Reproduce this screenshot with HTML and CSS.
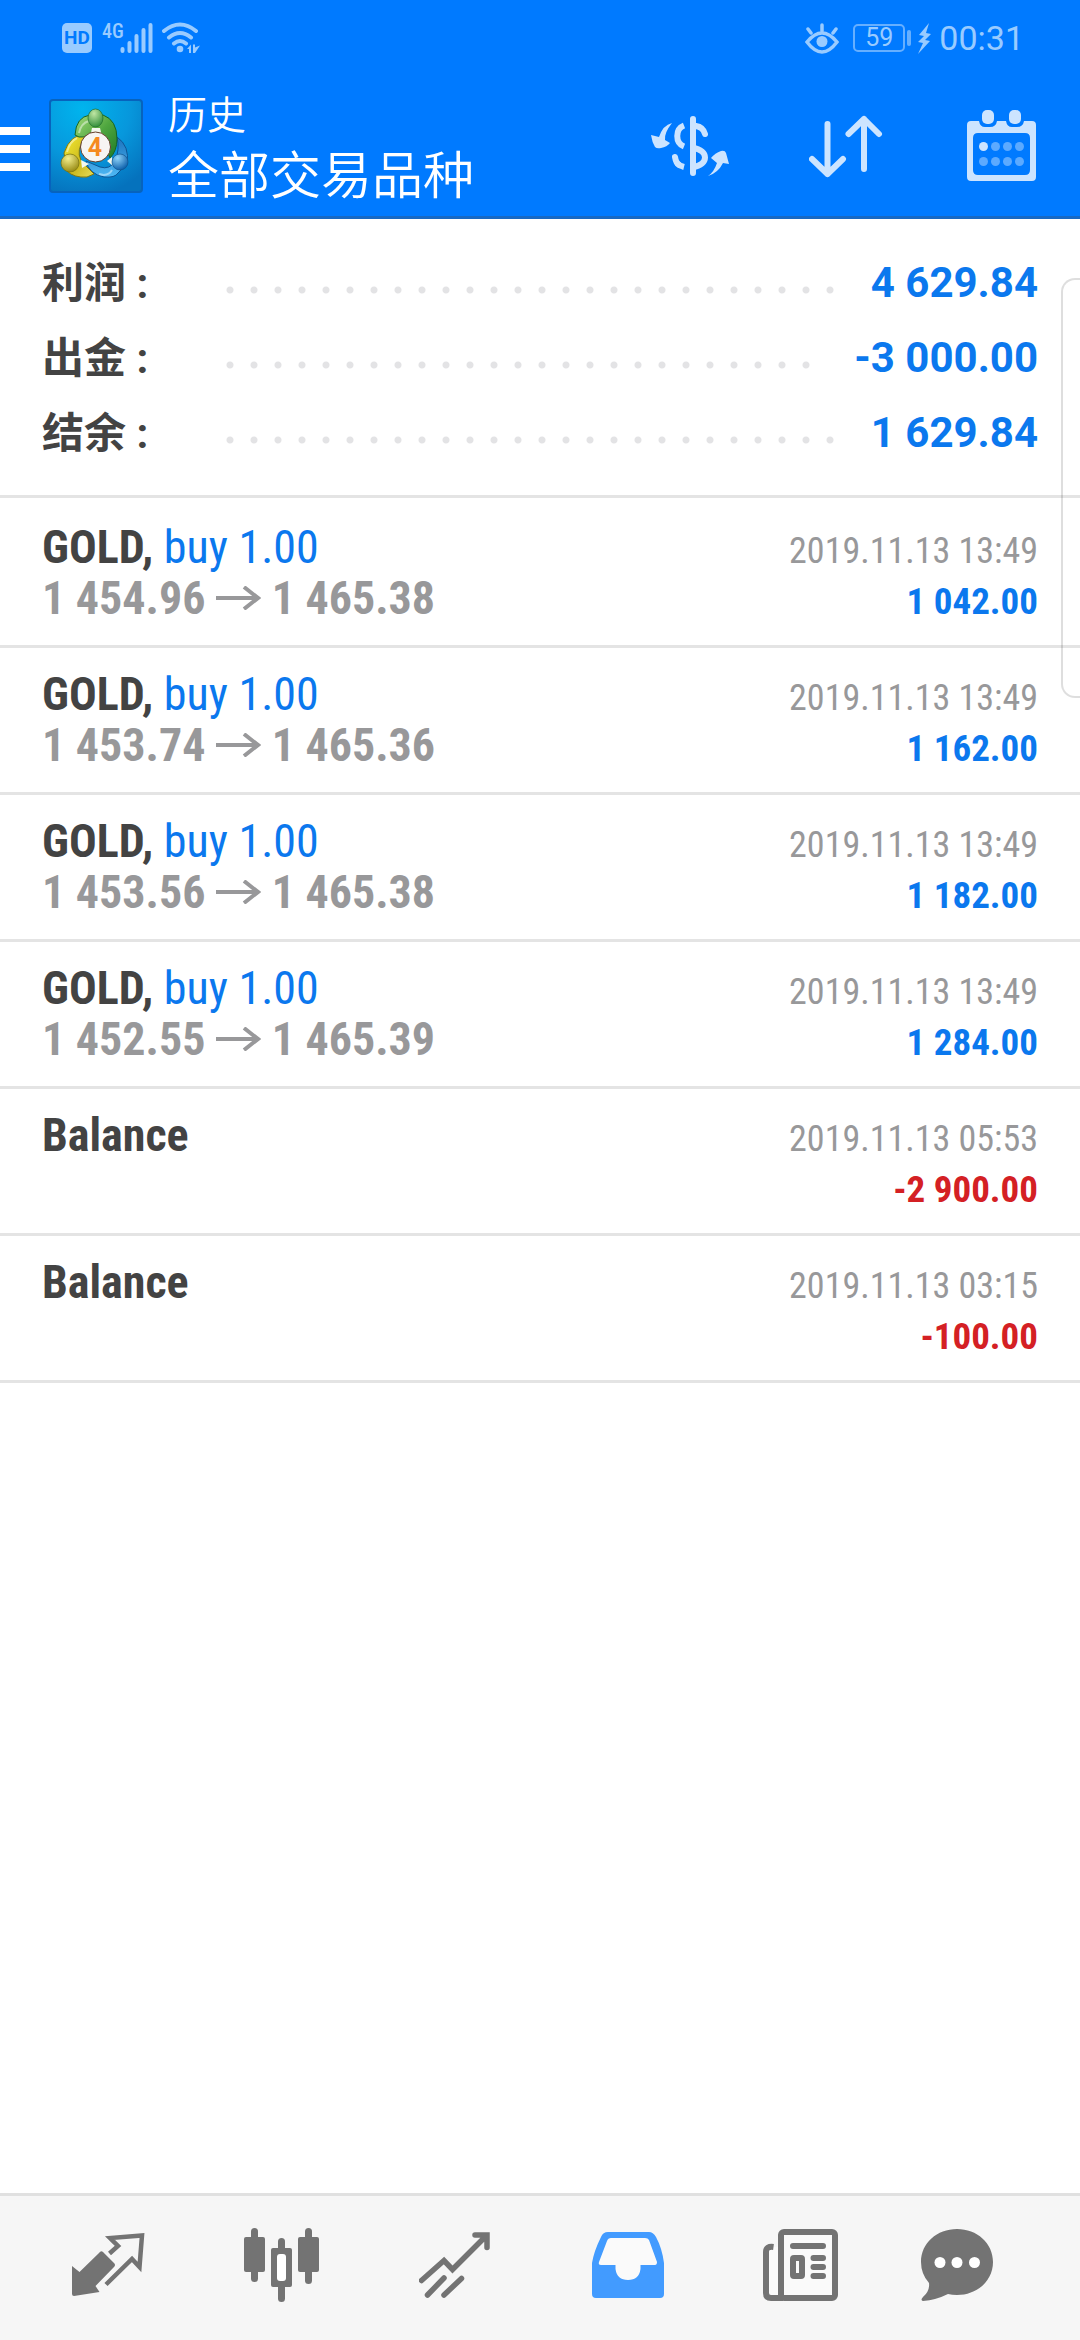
FILE: index.html
```html
<!DOCTYPE html>
<html lang="zh-CN">
<head>
<meta charset="utf-8">
<meta name="viewport" content="width=device-width, initial-scale=1">
<title>历史</title>
<link rel="stylesheet" href="styles.css">
</head>
<body>
<div class="app">
  <header class="top">
    <div class="status">
      <div class="status-group">
        <span class="hd">HD</span>
        <span class="network">4G</span>
        <svg class="signal" width="33" height="32" viewBox="0 0 33 32" fill="none" stroke="currentColor" stroke-width="4" stroke-linecap="round"><path d="M2.500 27v2M9.500 21v8M16.500 14v15M23.500 8v21M30.500 3v26"/></svg>
        <svg class="wifi" width="38" height="32" viewBox="0 0 38 32" fill="none" stroke="currentColor" stroke-width="4" stroke-linecap="round"><path d="M2 9q16-13 32 0M7 15.500q11-9 22 0M12 21.500q6-5 12 0"/><circle cx="18" cy="27" r="3.300" fill="currentColor" stroke="none"/><path d="M25 27l4-4.500v8.500h-2v-4zM31 22.500h2v3l5-2-5 7.500h-2z" fill="currentColor" stroke="none"/></svg>
      </div>
      <div class="status-group">
        <svg class="eye" width="34" height="31" viewBox="0 0 34 31" fill="none" stroke="currentColor" stroke-width="3.500" stroke-linecap="round"><path d="M2 19q15-18 30 0q-15 20-30 0zM17 2v6M3 6l3 4M31 6l-3 4"/><circle cx="17" cy="18.500" r="5.500" fill="currentColor" stroke="none"/></svg>
        <span class="battery">59</span>
        <span class="battery-cap"></span>
        <svg class="bolt" width="13" height="31" viewBox="0 0 13 31" fill="currentColor"><path d="M11 0L1 12l5 1-6 6 5 1-5 11 12-13-5-1 6-6-5-1z"/></svg>
        <time class="clock">00:31</time>
      </div>
    </div>
    <div class="toolbar">
      <button class="menu" aria-label="菜单">
        <span class="bars"><i></i><i></i><i></i></span>
        <svg class="logo" width="94" height="94" viewBox="0 0 94 94">
          <defs>
            <radialGradient id="sky" cx=".35" cy=".1" r=".95"><stop offset="0" stop-color="#00b4ee"/><stop offset=".55" stop-color="#0797dc"/><stop offset="1" stop-color="#0572bd"/></radialGradient>
            <linearGradient id="green" x2="1" y2="1"><stop offset="0" stop-color="#a5dc7c"/><stop offset=".5" stop-color="#4fa63f"/><stop offset="1" stop-color="#1e7a26"/></linearGradient>
            <linearGradient id="yellow" x2="1" y2="1"><stop offset="0" stop-color="#f7ee32"/><stop offset=".6" stop-color="#cbb91f"/><stop offset="1" stop-color="#e6dd5c"/></linearGradient>
            <linearGradient id="blue" x2="0" y2="1"><stop offset="0" stop-color="#1a72bd"/><stop offset="1" stop-color="#4fb9f5"/></linearGradient>
            <radialGradient id="gh" cx=".4" cy=".25" r=".8"><stop offset="0" stop-color="#c0e7a4"/><stop offset="1" stop-color="#2c8a36"/></radialGradient>
            <radialGradient id="yh" cx=".4" cy=".25" r=".8"><stop offset="0" stop-color="#f4ee8c"/><stop offset="1" stop-color="#92850d"/></radialGradient>
            <radialGradient id="bh" cx=".35" cy=".25" r=".8"><stop offset="0" stop-color="#8fd4fa"/><stop offset="1" stop-color="#085ba8"/></radialGradient>
          </defs>
          <rect x="1" y="1" width="92" height="92" rx="3" fill="url(#sky)" stroke="#0763bd" stroke-width="2"/>
          <path d="M68 38q13 9 10 27l-9 9q-3 5-14 4-15-3-18-16l14 6q10 3 15-6 5-11 2-24z" fill="url(#blue)" stroke="#0d5595"/>
          <path d="M38 35q-17 0-23 19l3 18q7 7 20 6l7-3-10-10q-8-8-3-20z" fill="url(#yellow)" stroke="#81770f"/>
          <path d="M26 36q1-18 15-20h13q14 5 14 24 0 12-7 19l-7-17-6-11h-4q-5 8-14 7z" fill="url(#green)" stroke="#176424"/>
          <path d="M30 34q2-10 10-12M18 53q3-11 10-14M50 75q9 3 13-4" fill="none" stroke="#fff" stroke-opacity=".45" stroke-width="2"/>
          <path d="M43 29h8l2 8-6-3-6 4zM32 61l8 4-7 4zM58 62l5-4 1 9z" fill="#f3f8ee"/>
          <ellipse cx="46.500" cy="19" rx="7.500" ry="9" fill="url(#gh)" stroke="#206c2c" stroke-width=".7"/>
          <circle cx="21" cy="64" r="9" fill="url(#yh)" stroke="#75700f" stroke-width=".7"/>
          <circle cx="71" cy="63" r="8" fill="url(#bh)" stroke="#10548f" stroke-width=".7"/>
          <circle cx="46.500" cy="48" r="15" fill="#f7f5f3" stroke="#653e2a"/>
          <text class="logo-digit" x="46" y="57" text-anchor="middle">4</text>
        </svg>
      </button>
      <div class="titles">
        <h1 class="title">历史</h1>
        <p class="subtitle">全部交易品种</p>
      </div>
      <div class="actions">
        <button class="action" aria-label="刷新">
          <svg width="78" height="60" viewBox="0 0 78 60" fill="none" stroke="currentColor" stroke-width="6"><path d="M42 3v54M54 18q-2-7-9-8M24 41q1 6 4 8" stroke-linecap="round"/><path d="M33 9.500C24 13 24 27 33 30.500M26 47q3 3 7 4M42 32C58 34 58 49 42 51"/><path d="M21 7Q12 9 8 21L0 19q1 7 4 12 2 2 6 1 6-1 9-5l-5-3Q13 17 21 7zM57 60q6-4 9-13l-6-5q4-5 10-7 4-1 5 2l3 11-6-1q-5 10-15 13z" fill="currentColor" stroke="none"/></svg>
        </button>
        <button class="action" aria-label="排序">
          <svg width="74" height="63" viewBox="0 0 74 63" fill="none" stroke="currentColor" stroke-width="6" stroke-linecap="round" stroke-linejoin="round"><path d="M18.500 9v50M3 44l15.500 15L34 44M55 54V4M39.500 19L55 4l15 15"/></svg>
        </button>
        <button class="action" aria-label="日期">
          <svg width="70" height="72" viewBox="0 0 70 72" fill="currentColor"><path fill-rule="evenodd" d="M4 11h8q1 6 6 6h5q6 0 7-6h9q1 6 6 6h5q6 0 7-6h8q4 0 4 4v52q0 4-4 4H4q-4 0-4-4V15q0-4 4-4zM11 23q-5 0-5 5v32q0 5 5 5h47q5 0 5-5V28q0-5-5-5z"/><rect x="15" width="12" height="14" rx="5"/><rect x="42" width="12" height="14" rx="5"/><circle cx="16.500" cy="36.500" r="4.500"/><g opacity=".45"><circle cx="28.500" cy="36.500" r="4.500"/><circle cx="40.500" cy="36.500" r="4.500"/><circle cx="52.500" cy="36.500" r="4.500"/><circle cx="16.500" cy="51.500" r="4.500"/><circle cx="28.500" cy="51.500" r="4.500"/><circle cx="40.500" cy="51.500" r="4.500"/><circle cx="52.500" cy="51.500" r="4.500"/></g></svg>
        </button>
      </div>
    </div>
  </header>

  <main class="content">
    <dl class="summary">
      <div class="sum-row"><dt>利润 :</dt><dd class="dots" aria-hidden="true"></dd><dd class="sum-value">4 629.84</dd></div>
      <div class="sum-row"><dt>出金 :</dt><dd class="dots" aria-hidden="true"></dd><dd class="sum-value">-3 000.00</dd></div>
      <div class="sum-row"><dt>结余 :</dt><dd class="dots" aria-hidden="true"></dd><dd class="sum-value">1 629.84</dd></div>
    </dl>
    <ul class="deals">
      <li class="deal"><div class="line"><span class="symbol">GOLD, <span class="side">buy 1.00</span></span><time class="date">2019.11.13 13:49</time></div><div class="line"><span class="price">1 454.96 <svg class="arrow" width="45" height="24" viewBox="0 0 45 24"><path d="M0 12h42M28 1l14 11-14 11"/></svg> 1 465.38</span><span class="amount">1 042.00</span></div></li>
      <li class="deal"><div class="line"><span class="symbol">GOLD, <span class="side">buy 1.00</span></span><time class="date">2019.11.13 13:49</time></div><div class="line"><span class="price">1 453.74 <svg class="arrow" width="45" height="24" viewBox="0 0 45 24"><path d="M0 12h42M28 1l14 11-14 11"/></svg> 1 465.36</span><span class="amount">1 162.00</span></div></li>
      <li class="deal"><div class="line"><span class="symbol">GOLD, <span class="side">buy 1.00</span></span><time class="date">2019.11.13 13:49</time></div><div class="line"><span class="price">1 453.56 <svg class="arrow" width="45" height="24" viewBox="0 0 45 24"><path d="M0 12h42M28 1l14 11-14 11"/></svg> 1 465.38</span><span class="amount">1 182.00</span></div></li>
      <li class="deal"><div class="line"><span class="symbol">GOLD, <span class="side">buy 1.00</span></span><time class="date">2019.11.13 13:49</time></div><div class="line"><span class="price">1 452.55 <svg class="arrow" width="45" height="24" viewBox="0 0 45 24"><path d="M0 12h42M28 1l14 11-14 11"/></svg> 1 465.39</span><span class="amount">1 284.00</span></div></li>
      <li class="deal"><div class="line"><span class="symbol">Balance</span><time class="date">2019.11.13 05:53</time></div><div class="line"><span class="amount loss">-2 900.00</span></div></li>
      <li class="deal"><div class="line"><span class="symbol">Balance</span><time class="date">2019.11.13 03:15</time></div><div class="line"><span class="amount loss">-100.00</span></div></li>
    </ul>
    <div class="edge-panel"></div>
  </main>

  <nav class="tabs">
    <a class="tab" href="#quotes" aria-label="行情"><svg width="74" height="64" viewBox="0 0 74 64"><path d="M0 33l7.500 6L27 20q2-3 4-1l11 11q2 2 0 4L23.500 53l4 6L2 63q-2 0-2-2z" fill="currentColor"/><path d="M37.500 20.500L46 13 38 5l32-2.500-2.500 31.500-7.500-8-26 25.500" fill="none" stroke="currentColor" stroke-width="4.500"/></svg></a>
    <a class="tab" href="#charts" aria-label="图表"><svg width="75" height="74" viewBox="0 0 75 74" fill="currentColor"><rect y="9" width="21" height="35" rx="2"/><rect x="7" width="7" height="54" rx="3.500"/><rect x="54" y="9" width="21" height="35" rx="2"/><rect x="61" width="7" height="56" rx="3.500"/><rect x="34" y="10" width="7" height="64" rx="3.500"/><rect x="27" y="20" width="21" height="39" rx="2"/><rect x="33" y="26" width="9" height="27" rx="3" fill="#fff"/></svg></a>
    <a class="tab" href="#trade" aria-label="交易"><svg width="71" height="66" viewBox="0 0 71 66" fill="none" stroke="currentColor" stroke-width="5.500" stroke-linecap="round"><path d="M2.500 48.500L25 28.500l8.500 9L67 4M56 3h12v12.500M8.500 63L25 46M25 63l17.500-16.500"/></svg></a>
    <a class="tab active" href="#history" aria-label="历史" aria-current="page"><svg width="72" height="66" viewBox="0 0 72 66"><path d="M0 31q2-12 9-26 2-5 7-5h41q4 0 7 5 6 11 8 26v31q0 4-4 4H4q-4 0-4-4z" fill="currentColor"/><path d="M19 6h34q3 0 4 2l8 22q0 3-2 3H48.500v4Q47 48 36 48T23.500 37v-4H9q-3 0-2-3l8-21q1-3 4-3z" fill="#fafafa"/></svg></a>
    <a class="tab" href="#news" aria-label="新闻"><svg width="75" height="72" viewBox="0 0 75 72" fill="none" stroke="currentColor" stroke-width="6"><path fill="#fafafa" stroke="none" d="M4 18h14v50H4z"/><rect x="18" y="3" width="54" height="66" rx="3" fill="#fafafa"/><path d="M10.500 18Q3 17 3 23v41q0 5 5 5h12"/><path d="M30 17h30M50.500 29H60M50.500 38H60M50.500 47H60" stroke-linecap="round"/><rect x="30" y="29" width="9" height="18" rx="1"/></svg></a>
    <a class="tab" href="#mail" aria-label="消息"><svg width="72" height="72" viewBox="0 0 72 72"><path d="M36 0c20 0 36 14 36 33S56 66 36 66q-5 0-9-1-12 6-25 7-3-1 0-4 7-6 6-14Q0 45 0 33C0 14 16 0 36 0z" fill="currentColor"/><g fill="#fff"><circle cx="19" cy="33.500" r="5.500"/><circle cx="36" cy="33.500" r="5.500"/><circle cx="53.500" cy="33.500" r="5.500"/></g></svg></a>
  </nav>
</div>
</body>
</html>
```
FILE: styles.css
```css
* {
  box-sizing: border-box;
}

body,
h1,
p,
dl,
dd,
ul {
  margin: 0;
  padding: 0;
}

body {
  font-family: Roboto, "Noto Sans CJK SC", sans-serif;
  background: #fff;
  color: #434343;
}

svg {
  display: block;
  flex: none;
}

button {
  border: 0;
  padding: 0;
  background: none;
  color: inherit;
  font: inherit;
}

.app {
  display: flex;
  flex-direction: column;
  min-height: 100vh;
}

/* Header */
.top {
  background: #007aff;
  border-bottom: 3px solid #1769c4;
  color: #fff;
}

.status {
  display: flex;
  justify-content: space-between;
  align-items: center;
  height: 76px;
  padding: 0 56px 0 62px;
  color: #99cbff;
}

.status-group {
  display: flex;
  align-items: center;
}

.hd {
  width: 30px;
  border-radius: 5px;
  background: #99cbff;
  color: #007aff;
  font: bold 19px/30px Roboto, sans-serif;
  text-align: center;
}

.network {
  align-self: flex-start;
  margin-left: 10px;
  width: 18px;
  font: 500 20px/18px "Roboto Condensed", "Liberation Sans Narrow", sans-serif;
}

.wifi {
  margin-left: 9px;
}

.battery {
  width: 52px;
  margin-left: 14px;
  border: 2px solid #66afff;
  border-radius: 5px;
  font-size: 25px;
  line-height: 24px;
  text-align: center;
}

.battery-cap {
  width: 4px;
  height: 16px;
  margin: 0 7px 0 2px;
  border-radius: 2px;
  background: #66afff;
}

.clock {
  margin-left: 8px;
  font-size: 34px;
  line-height: 40px;
}

.toolbar {
  display: flex;
  height: 140px;
}

.menu {
  display: flex;
  align-items: center;
  gap: 19px;
}

.bars {
  display: grid;
  gap: 10px;
  padding-top: 6px;
}

.bars i {
  width: 30px;
  height: 8px;
  background: #fff;
}

.logo-digit {
  font: bold 25px Roboto, sans-serif;
  fill: #f58a1f;
}

.titles {
  flex: 1;
  padding: 11px 0 0 25px;
}

.title {
  font-size: 39px;
  font-weight: 350;
  line-height: 58px;
}

.subtitle {
  font-size: 51px;
  font-weight: 350;
  line-height: 64px;
}

.actions {
  display: flex;
}

.action {
  display: grid;
  place-items: center;
  width: 156px;
  color: #cce4ff;
}

/* Totals */
.content {
  position: relative;
  flex: 1;
}

.summary {
  padding: 25px 42px 26px;
  border-bottom: 3px solid #e4e4e4;
}

.sum-row {
  display: flex;
  align-items: center;
  height: 75px;
  font-size: 42px;
  font-weight: 700;
  line-height: 70px;
}

.sum-row dt {
  width: 176px;
  padding-top: 5px;
}

.dots {
  flex: 1;
  height: 24px;
  margin: 16px 34px 0 0;
  background: radial-gradient(circle at center, #e3e3e5 3px, transparent 4px) 0 0 / 24px 24px repeat-x;
}

.sum-value {
  padding-top: 2px;
  color: #0b78ee;
}

/* Deals */
.deals {
  padding-top: 3px;
  list-style: none;
  font-family: "Roboto Condensed", "Liberation Sans Narrow", sans-serif;
}

.deal {
  padding: 21px 42px;
  border-bottom: 3px solid #e4e4e4;
}

.line {
  display: flex;
  align-items: baseline;
  height: 51px;
  line-height: 51px;
}

/* Keeps the baseline of a line that has only an amount */
.line::before {
  content: "\200b";
  font-size: 46px;
  font-weight: 700;
}

.symbol {
  font-size: 46px;
  font-weight: 700;
}

.side {
  color: #0b78ee;
  font-weight: 400;
}

.price {
  color: #98989a;
  font-size: 46px;
  font-weight: 700;
}

.arrow {
  display: inline-block;
  margin-bottom: 4px;
  fill: none;
  stroke: currentColor;
  stroke-width: 4;
}

.date,
.amount {
  margin-left: auto;
}

.date {
  color: #98989a;
  font-size: 36px;
}

.amount {
  color: #0b78ee;
  font-size: 37px;
  font-weight: 700;
}

.loss {
  color: #d42024;
}

.edge-panel {
  position: absolute;
  top: 59px;
  right: 0;
  width: 19px;
  height: 420px;
  border: 2px solid rgba(0, 0, 0, 0.13);
  border-right: 0;
  border-radius: 14px 0 0 14px;
}

/* Bottom navigation */
.tabs {
  display: grid;
  grid-template-columns: repeat(5, 173fr) 140fr;
  height: 147px;
  padding: 0 53px 0 22px;
  border-top: 3px solid #e0e0e0;
  background: #f6f6f6;
}

.tab {
  display: grid;
  place-items: center;
  padding-bottom: 6px;
  color: #737373;
}

.tab.active {
  color: #429bff;
}
```
